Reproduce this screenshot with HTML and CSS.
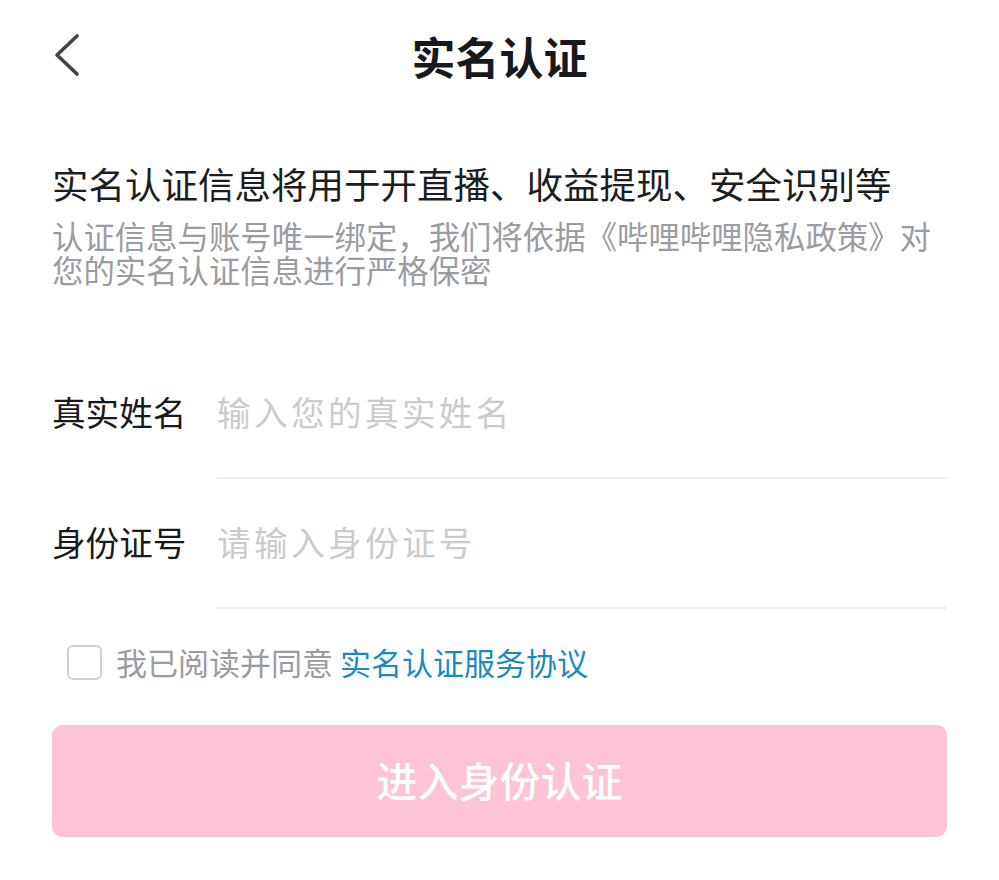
FILE: index.html
```html
<!DOCTYPE html>
<html lang="zh-CN">
<head>
<meta charset="utf-8">
<title>实名认证</title>
<link rel="stylesheet" href="styles.css">
</head>
<body>
<div class="page">
  <header class="header">
    <div class="back">
      <svg width="40" height="50" viewBox="0 0 40 50"><polyline points="25,5 5,24 25,43" fill="none" stroke="#41444b" stroke-width="3.6" stroke-linecap="round" stroke-linejoin="round"/></svg>
    </div>
    <h1 class="title">实名认证</h1>
    <div></div>
  </header>

  <section class="intro">
    <h2 class="intro-title">实名认证信息将用于开直播、收益提现、安全识别等</h2>
    <p class="intro-desc">认证信息与账号唯一绑定，我们将依据《哔哩哔哩隐私政策》对您的实名认证信息进行严格保密</p>
  </section>

  <section class="form">
    <div class="row">
      <div class="label">真实姓名</div>
      <div class="field"><span class="placeholder">输入您的真实姓名</span></div>
    </div>
    <div class="row">
      <div class="label">身份证号</div>
      <div class="field"><span class="placeholder">请输入身份证号</span></div>
    </div>
  </section>

  <div class="agree">
    <span class="checkbox"></span>
    <span class="agree-text">我已阅读并同意 <span class="link">实名认证服务协议</span></span>
  </div>

  <div class="btn">进入身份认证</div>
</div>
</body>
</html>
```

FILE: styles.css
```css
* { box-sizing: border-box; }
html, body { margin: 0; padding: 0; background: #fff; }
body {
  font-family: "Noto Sans CJK SC", "Noto Sans", sans-serif;
  color: #18191c;
}
.page { width: 999px; padding: 0 52px 0 52px; }

.header {
  height: 112px;
  display: grid;
  grid-template-columns: 1fr auto 1fr;
  align-items: center;
}
.back { display: flex; align-items: center; }
.back svg { display: block; margin-top: 0; }
.title {
  margin: 0;
  font-size: 44px;
  font-weight: 700;
  line-height: 56px;
  color: #18191c;
}

.intro { margin-top: 48px; }
.intro-title {
  margin: 0;
  font-size: 36.5px;
  font-weight: 400;
  line-height: 48px;
  color: #1c1d20;
}
.intro-desc {
  margin: 11px 0 0;
  font-size: 31.4px;
  line-height: 34px;
  color: #9a9ca2;
}

.form { margin-top: 62px; }
.row {
  display: flex;
  height: 130px;
}
.label {
  width: 165px;
  padding-top: 43px;
  font-size: 33.6px;
  line-height: 40px;
  color: #18191c;
}
.field {
  flex: 1;
  padding-top: 43px;
  border-bottom: 2px solid #eeeeef;
}
.placeholder {
  font-size: 33.6px;
  line-height: 40px;
  letter-spacing: 3.4px;
  color: #c9cbcf;
}

.agree {
  display: flex;
  align-items: center;
  margin-top: 33px;
  padding-left: 15px;
  height: 40px;
}
.checkbox {
  width: 35px;
  height: 35px;
  border: 2.5px solid #cfd0d3;
  border-radius: 6px;
}
.agree-text {
  margin-left: 14px;
  font-size: 31px;
  line-height: 40px;
  color: #9a9ca2;
}
.link { color: #1a8bc0; }

.btn {
  margin-top: 43px;
  height: 112px;
  border-radius: 11px;
  background: #fdc3d6;
  color: #fff;
  font-size: 41px;
  font-weight: 500;
  display: flex;
  align-items: center;
  justify-content: center;
  padding-bottom: 4px;
}
```
